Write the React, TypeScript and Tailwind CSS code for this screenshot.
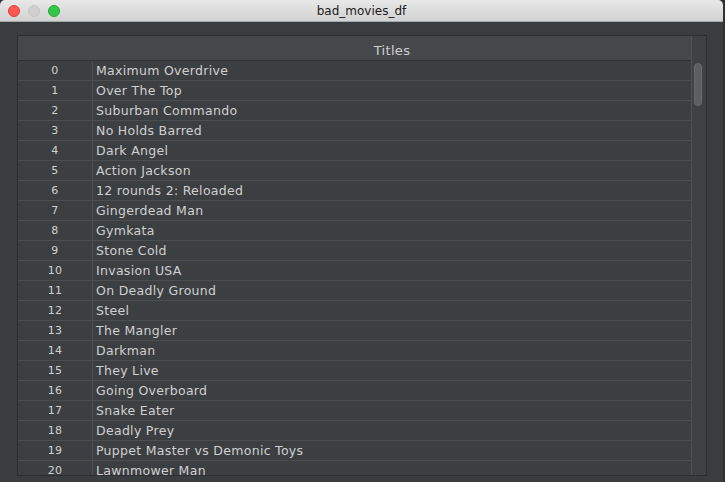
import React from "react";

const titles = [
  "Maximum Overdrive",
  "Over The Top",
  "Suburban Commando",
  "No Holds Barred",
  "Dark Angel",
  "Action Jackson",
  "12 rounds 2: Reloaded",
  "Gingerdead Man",
  "Gymkata",
  "Stone Cold",
  "Invasion USA",
  "On Deadly Ground",
  "Steel",
  "The Mangler",
  "Darkman",
  "They Live",
  "Going Overboard",
  "Snake Eater",
  "Deadly Prey",
  "Puppet Master vs Demonic Toys",
  "Lawnmower Man",
];

export default function App() {
  return (
    <div className="w-[725px] h-[482px] overflow-hidden bg-[#2f3133] flex flex-col" style={{ fontFamily: '"DejaVu Sans", sans-serif' }}>
      <div className="h-[22px] shrink-0 rounded-t-[5px] bg-gradient-to-b from-[#e8e8e8] to-[#d2d2d2] border-b border-[#a9a9a9] relative flex items-center justify-center w-[723px]">
        <div className="absolute left-[8px] top-[5px] flex gap-[8px]">
          <div className="w-[12px] h-[12px] rounded-full bg-[#fc5753] border border-[#df3d39]" />
          <div className="w-[12px] h-[12px] rounded-full bg-[#d0d0d0] border border-[#c4c4c4]" />
          <div className="w-[12px] h-[12px] rounded-full bg-[#34c84a] border border-[#24a534]" />
        </div>
        <span className="text-[12px] text-[#1a1a1a]">bad_movies_df</span>
      </div>
      <div className="h-[460px] shrink-0 bg-[#3a3d40] pl-[17px] pt-[13px] w-[723px]">
        <div className="w-[690px] h-[441px] border border-[#2c2e30] flex overflow-hidden">
          <div className="flex-1 flex flex-col bg-[#3c3f42] min-w-0 overflow-hidden">
            <div className="h-[25px] shrink-0 bg-[#45484b] border-b border-[#2e3032] flex items-end">
              <div className="w-[75px] h-full shrink-0" />
              <div className="flex-1 text-center text-[13px] leading-[16px] tracking-[0.3px] text-[#cfcfcf] pb-[1px]">Titles</div>
            </div>
            {titles.map((t, i) => (
              <div key={i} className="h-[20px] shrink-0 flex border-b border-[#4c4f52] text-[12.5px] tracking-[0.3px] text-[#d0d0d0]">
                <div className="w-[75px] shrink-0 border-r border-[#4c4f52] flex items-center justify-center text-[11px] pt-[1px]">{i}</div>
                <div className="flex-1 flex items-center pl-[3px] pt-[1px]">{t}</div>
              </div>
            ))}
          </div>
          <div className="w-[15px] shrink-0 bg-[#3f4245] border-l border-[#505356] relative">
            <div className="absolute left-[2px] top-[27px] w-[8px] h-[43px] rounded-full bg-[#5c5f62] border border-[#686b6e]" />
          </div>
        </div>
      </div>
    </div>
  );
}
